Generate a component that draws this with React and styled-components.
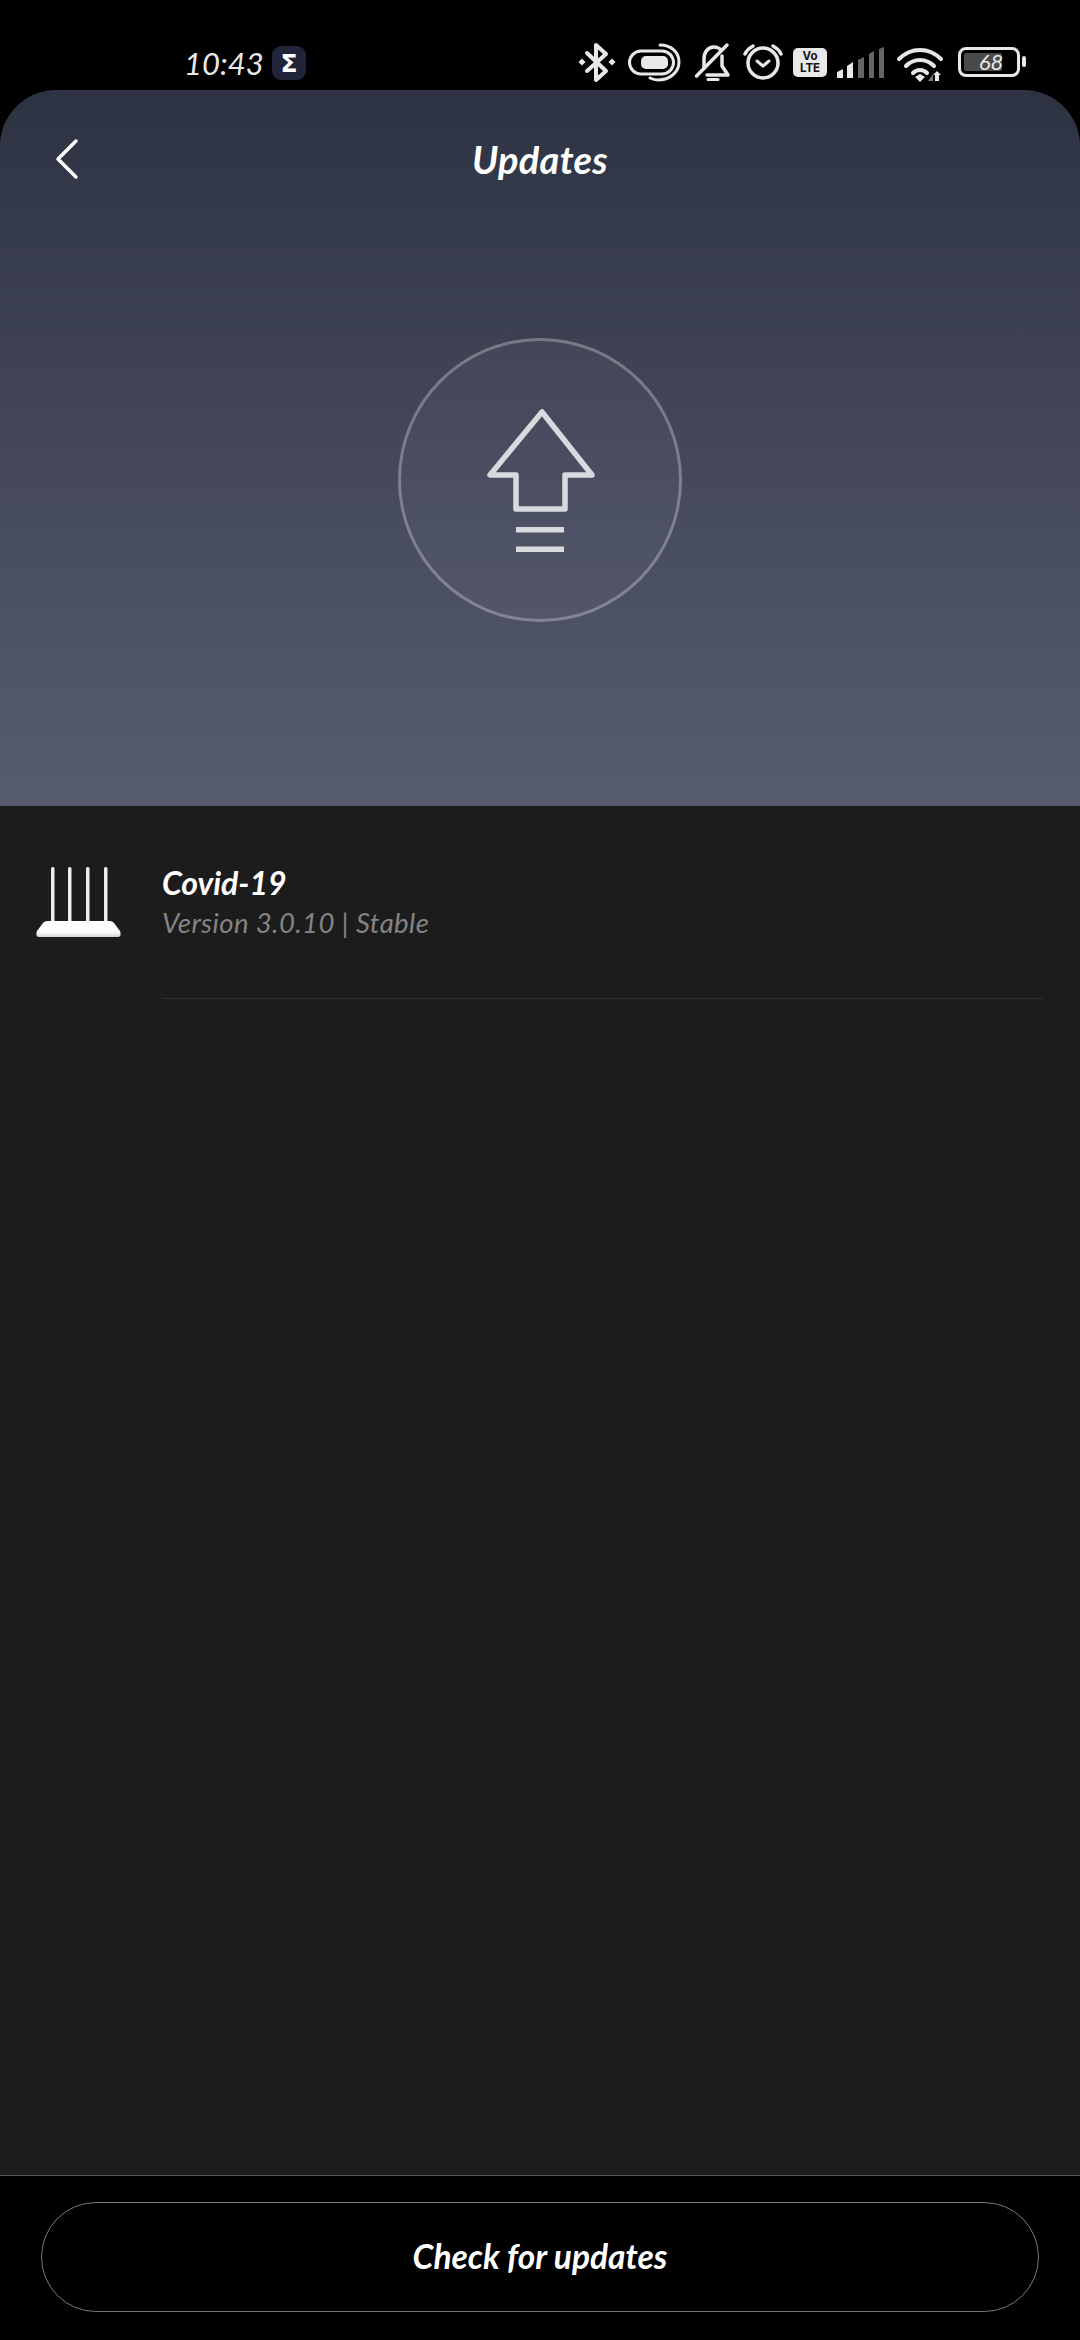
import React from "react";
import styled, { createGlobalStyle } from "styled-components";

const Global = createGlobalStyle`
  html, body { margin: 0; padding: 0; background: #000; }
  * { box-sizing: border-box; }
  #root { width: 1080px; height: 2340px; }
`;

const hand = `"Lato", "Open Sans", sans-serif`;

const Page = styled.div`
  width: 1080px;
  height: 2340px;
  display: flex;
  flex-direction: column;
  background: #000;
  font-family: ${hand};
  font-style: italic;
  color: #fff;
`;

const StatusBar = styled.div`
  height: 90px;
  flex: none;
  display: flex;
  align-items: flex-start;
  justify-content: space-between;
  padding: 43px 54px 0 184px;
`;

const TimeGroup = styled.div`
  display: flex;
  align-items: center;
  gap: 9px;
  margin-top: 2px;
`;

const Time = styled.span`
  width: 79px;
  font-size: 31px;
  line-height: 36px;
  font-weight: 400;
  color: #e8e8e8;
  white-space: nowrap;
`;

const SigmaBadge = styled.span`
  width: 34px;
  height: 34px;
  border-radius: 9px;
  background: #1f2438;
  color: #fff;
  display: flex;
  align-items: center;
  justify-content: center;
  font: 700 25px/1 "DejaVu Sans", sans-serif;
`;

const Icons = styled.div`
  display: flex;
  align-items: flex-start;
`;

const Glyph = styled.svg`
  display: block;
  flex: none;
  margin-left: ${(p) => p.$gap || 0}px;
  margin-top: ${(p) => p.$top || 0}px;
  color: #e8e8e8;
  overflow: visible;
`;

const VoLte = styled.div`
  width: 34px;
  height: 29px;
  margin: 5px 0 0 10px;
  border-radius: 5px;
  background: #e8e8e8;
  color: #111;
  font: 700 11.5px/11.5px "Inter", sans-serif;
  text-align: center;
  padding-top: 3px;
`;

const Battery = styled.div`
  position: relative;
  width: 62px;
  height: 30px;
  margin: 4px 0 0 15px;
  border: 3.5px solid #e8e8e8;
  border-radius: 8px;
  display: flex;
  align-items: center;
  justify-content: center;
  font-size: 22px;
  line-height: 1;
  color: #e8e8e8;
`;

const BatteryFill = styled.div`
  position: absolute;
  left: 3px;
  top: 3px;
  bottom: 3px;
  border-radius: 2px;
  background: #4a4a4a;
`;

const BatteryLabel = styled.span`
  position: relative;
  margin-left: 4px;
`;

const BatteryNub = styled.div`
  width: 4px;
  height: 11px;
  margin: 13px 0 0 2px;
  border-radius: 2px;
  background: #e8e8e8;
`;

const Hero = styled.header`
  height: 716px;
  flex: none;
  border-radius: 56px 56px 0 0;
  background: linear-gradient(180deg, #2e3343 0%, #585c70 100%);
  display: flex;
  flex-direction: column;
  align-items: center;
`;

const NavBar = styled.div`
  position: relative;
  width: 100%;
  height: 140px;
  flex: none;
  display: flex;
  justify-content: center;
  padding-top: 46px;
`;

const BackButton = styled.button`
  position: absolute;
  left: 54px;
  top: 47px;
  width: 26px;
  height: 44px;
  padding: 0;
  border: 0;
  background: none;
  color: #fff;
`;

const Title = styled.h1`
  margin: 0;
  font-size: 38px;
  line-height: 46px;
  font-weight: 700;
  letter-spacing: 0.3px;
`;

const UpdateCircle = styled.div`
  width: 284px;
  height: 284px;
  margin-top: 108px;
  border-radius: 50%;
  border: 3px solid rgba(255, 255, 255, 0.28);
  background: rgba(255, 255, 255, 0.03);
  display: flex;
  align-items: center;
  justify-content: center;
`;

const Body = styled.main`
  flex: 1;
  background: #1c1c1c;
  padding-top: 52px;
`;

const Row = styled.div`
  display: flex;
  align-items: flex-start;
  padding: 9px 36px 0 36px;
`;

const RowText = styled.div`
  margin-left: 41px;
  flex: 1;
  height: 132px;
  border-bottom: 1.5px solid #303030;
`;

const RowTitle = styled.div`
  font-size: 32px;
  line-height: 34px;
  font-weight: 700;
  color: #fff;
  margin-top: -1px;
`;

const RowSub = styled.div`
  font-size: 27.5px;
  line-height: 34px;
  font-weight: 400;
  color: #848484;
  margin-top: 6px;
  letter-spacing: 0.4px;
`;

const Footer = styled.footer`
  height: 165px;
  flex: none;
  border-top: 1.5px solid #555;
  background: #000;
  padding: 26px 41px 0;
`;

const CheckButton = styled.button`
  display: block;
  width: 100%;
  height: 110px;
  border: 1.5px solid #7a7a7a;
  border-radius: 55px;
  background: transparent;
  color: #fff;
  font: italic 700 33.5px/1 ${hand};
  padding: 0;
`;

const stroke = {
  fill: "none",
  stroke: "currentColor",
  strokeLinecap: "round",
  strokeLinejoin: "round",
};

export default function App() {
  return (
    <Page>
      <Global />
      <StatusBar>
        <TimeGroup>
          <Time>10:43</Time>
          <SigmaBadge>Σ</SigmaBadge>
        </TimeGroup>
        <Icons>
          <Glyph width="36" height="40" viewBox="0 0 36 40">
            <path d="M8 10 L27 28 L17 37 V2 L27 11 L8 28" {...stroke} strokeWidth="4" />
            <path d="M3 15.5 L6.5 19 L3 22.5 L-0.5 19Z M33 15.5 L36.5 19 L33 22.5 L29.5 19Z" fill="currentColor" />
          </Glyph>
          <Glyph width="53" height="40" viewBox="0 0 53 40" $gap={13}>
            <rect x="1.5" y="8" width="44" height="23" rx="11.5" {...stroke} strokeWidth="3" />
            <rect x="13" y="13" width="27" height="13" rx="5" fill="currentColor" />
            <path d="M32 2 C44 2 51 10 51 19 C51 29 42 37 30 37 C27 37 24 36 22 35" {...stroke} strokeWidth="3" />
          </Glyph>
          <Glyph width="35" height="40" viewBox="0 0 35 40" $gap={14}>
            <path d="M9 25 V16 C9 9 13 4 19 4 C22 4 24 5 26 7 M27 13 V23 L33 32 H12" {...stroke} strokeWidth="3.5" />
            <path d="M1.5 33 L32 2" {...stroke} strokeWidth="3.5" />
            <path d="M13 36.5 H23" {...stroke} strokeWidth="3" />
          </Glyph>
          <Glyph width="40" height="40" viewBox="0 0 40 40" $gap={13}>
            <circle cx="20" cy="20" r="15" {...stroke} strokeWidth="3.5" />
            <path d="M14 18 L20 23 L26 18" {...stroke} strokeWidth="3" />
            <path d="M2 11 C4 7 6 5 10 3 M30 3 C34 5 36 7 38 11" {...stroke} strokeWidth="3.5" />
          </Glyph>
          <VoLte>
            Vo
            <br />
            LTE
          </VoLte>
          <Glyph width="47" height="32" viewBox="0 0 47 32" $gap={10} $top={4}>
            <path d="M0 25 L6 22 V31 H0Z M10 19 L16 15 V31 H10Z" fill="#e8e8e8" />
            <path d="M21 13 L27 10 V31 H21Z M32 7 L37 4 V31 H32Z M42 2 L47 0 V31 H42Z" fill="#666" />
          </Glyph>
          <Glyph width="46" height="38" viewBox="0 0 46 38" $gap={13} $top={3}>
            <path d="M2 13 C14 1 32 1 44 13 M9 20 C17 12 29 12 37 20 M16 27 C20 23 26 23 30 27" {...stroke} strokeWidth="4" />
            <path d="M18 31 L23 28 L28 31 L23 36Z" fill="currentColor" />
            <path d="M31 35 L36 28 V35Z" fill="#777" />
            <path d="M38 35 V29 H36 L40 25 L44 29 H42 V35Z" fill="#e8e8e8" />
          </Glyph>
          <Battery>
            <BatteryFill style={{ width: "68%" }} />
            <BatteryLabel>68</BatteryLabel>
          </Battery>
          <BatteryNub />
        </Icons>
      </StatusBar>

      <Hero>
        <NavBar>
          <BackButton aria-label="Back">
            <svg width="26" height="44" viewBox="0 0 26 44">
              <path d="M22 4 L4 22 L22 40" {...stroke} strokeWidth="3.5" />
            </svg>
          </BackButton>
          <Title>Updates</Title>
        </NavBar>
        <UpdateCircle>
          <svg width="110" height="146" viewBox="0 0 110 146">
            <path
              d="M57 5 L5 68 H31 V102 H80 V68 H107 Z"
              fill="none"
              stroke="#d9dade"
              strokeWidth="5.5"
              strokeLinejoin="round"
            />
            <rect x="31" y="120" width="48" height="5.5" fill="#d9dade" />
            <rect x="31" y="139.5" width="48" height="5.5" fill="#d9dade" />
          </svg>
        </UpdateCircle>
      </Hero>

      <Body>
        <Row>
          <svg width="85" height="70" viewBox="0 0 85 70">
            <defs>
              <linearGradient id="routerBase" x1="0" y1="0" x2="0" y2="1">
                <stop offset="0" stopColor="#ffffff" />
                <stop offset="0.7" stopColor="#fbfbfb" />
                <stop offset="1" stopColor="#d4d4d4" />
              </linearGradient>
            </defs>
            <rect x="15" y="0" width="3.5" height="56" rx="1.5" fill="#eee" />
            <rect x="32" y="0" width="3.5" height="56" rx="1.5" fill="#eee" />
            <rect x="50" y="0" width="3.5" height="56" rx="1.5" fill="#eee" />
            <rect x="68" y="0" width="3.5" height="56" rx="1.5" fill="#eee" />
            <path
              d="M11 54 H74 C76 54 77 55 78 56 L84 64 C85 67 85 70 82 70 H3 C0 70 0 67 1 64 L7 56 C8 55 9 54 11 54Z"
              fill="url(#routerBase)"
            />
          </svg>
          <RowText>
            <RowTitle>Covid-19</RowTitle>
            <RowSub>Version 3.0.10 | Stable</RowSub>
          </RowText>
        </Row>
      </Body>

      <Footer>
        <CheckButton>Check for updates</CheckButton>
      </Footer>
    </Page>
  );
}
